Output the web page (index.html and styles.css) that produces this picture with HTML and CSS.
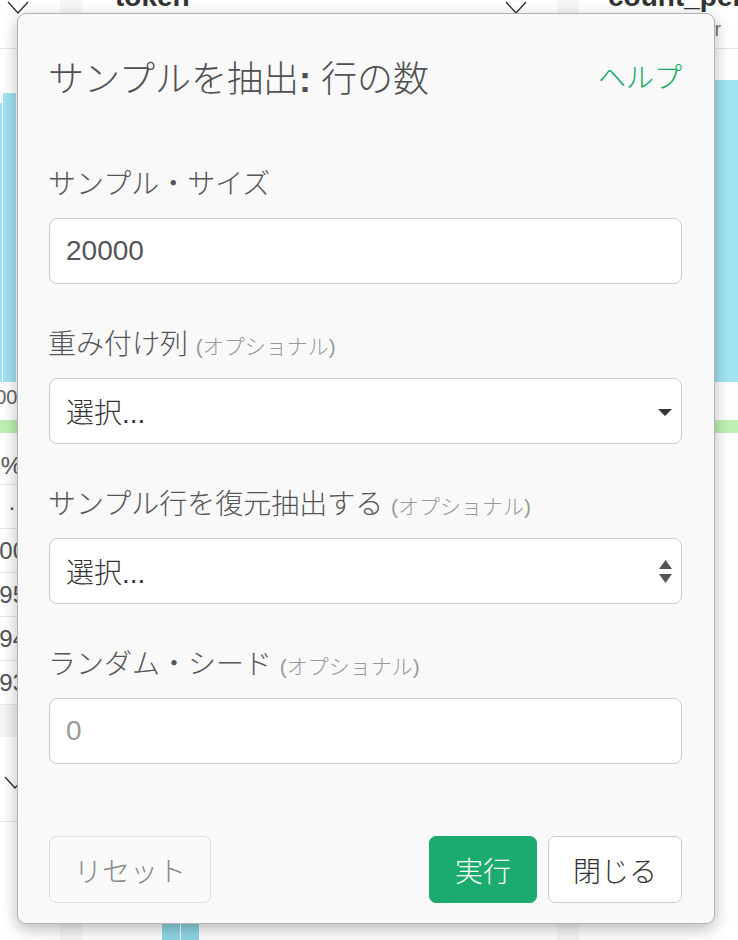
FILE: index.html
```html
<!DOCTYPE html>
<html lang="ja">
<head>
<meta charset="utf-8">
<title>サンプルを抽出</title>
<link rel="stylesheet" href="styles.css">
</head>
<body>
<div class="page">
  <div class="col col-a">
    <div class="hdr hdr-a">
      <svg class="chev" width="22" height="13" viewBox="0 0 22 13"><polyline points="1,1 11,12 21,1" fill="none" stroke="#333" stroke-width="1.4"/></svg>
    </div>
    <div class="gap-a"></div>
    <div class="chart-a"><div class="bar-thin"></div><div class="bar-wide"></div></div>
    <div class="axis">1000</div>
    <div class="green"></div>
    <div class="cell cell-pct">%</div>
    <div class="cell cell-dot">·</div>
    <div class="cell">100</div>
    <div class="cell">95</div>
    <div class="cell">94</div>
    <div class="cell">93</div>
    <div class="band"></div>
    <div class="hdr2">
      <svg class="chev" width="22" height="13" viewBox="0 0 22 13"><polyline points="1,1 11,12 21,1" fill="none" stroke="#333" stroke-width="1.4"/></svg>
    </div>
  </div>
  <div class="sep"></div>
  <div class="col col-b">
    <div class="hdr hdr-b">
      <span class="colname">token</span>
      <svg class="chev" width="22" height="13" viewBox="0 0 22 13"><polyline points="1,1 11,12 21,1" fill="none" stroke="#333" stroke-width="1.4"/></svg>
    </div>
    <div class="fill-b"></div>
    <div class="bars-b"><div class="bar-b"></div><div class="bar-b"></div></div>
  </div>
  <div class="sep"></div>
  <div class="col col-c">
    <div class="hdr hdr-c">
      <span class="colname">count_per_user</span>
      <span class="coltype">Number</span>
    </div>
    <div class="gap-c"></div>
    <div class="chart-c"></div>
    <div class="gap-c2"></div>
    <div class="green green-c"></div>
  </div>
</div>

<div class="modal">
  <div class="modal-head">
    <h1 class="modal-title">サンプルを抽出<b>:</b> 行の数</h1>
    <span class="help">ヘルプ</span>
  </div>
  <div class="modal-body">
    <div class="form-group">
      <div class="label">サンプル・サイズ</div>
      <div class="field"><span class="value">20000</span></div>
    </div>
    <div class="form-group">
      <div class="label">重み付け列 <span class="opt">(オプショナル)</span></div>
      <div class="field field-select">
        <span class="select-text">選択...</span>
        <svg class="caret" width="14" height="7" viewBox="0 0 14 7"><polygon points="0,0 14,0 7,7" fill="#333"/></svg>
      </div>
    </div>
    <div class="form-group">
      <div class="label">サンプル行を復元抽出する <span class="opt">(オプショナル)</span></div>
      <div class="field field-select">
        <span class="select-text">選択...</span>
        <svg class="updown" width="13" height="23" viewBox="0 0 13 23"><polygon points="6.5,0 13,9 0,9" fill="#555"/><polygon points="0,14 13,14 6.5,23" fill="#555"/></svg>
      </div>
    </div>
    <div class="form-group">
      <div class="label">ランダム・シード <span class="opt">(オプショナル)</span></div>
      <div class="field"><span class="placeholder">0</span></div>
    </div>
  </div>
  <div class="modal-foot">
    <button class="btn btn-reset">リセット</button>
    <div class="spacer"></div>
    <button class="btn btn-run">実行</button>
    <button class="btn btn-close">閉じる</button>
  </div>
</div>
</body>
</html>
```

FILE: styles.css
```css
* { box-sizing: border-box; }
html, body {
  margin: 0;
  padding: 0;
  background: #ffffff;
}
body {
  width: 738px;
  height: 940px;
  overflow: hidden;
  font-family: "Liberation Sans", "Noto Sans CJK JP", sans-serif;
  color: #555;
}

/* background data grid */
.page {
  display: flex;
  height: 940px;
}
.col { display: flex; flex-direction: column; overflow: hidden; }
.col-a { width: 60px; }
.col-b { width: 475px; }
.col-c { flex: 1; }
.sep { width: 22px; background: #f6f6f6; }

.hdr {
  height: 49px;
  border-bottom: 1px solid #e6e6e6;
  flex: none;
}
.hdr-a { padding: 1px 0 0 7px; }
.chev { display: block; }
.gap-a { height: 44px; flex: none; }
.chart-a { height: 289px; display: flex; flex: none; }
.bar-thin { width: 2px; background: #9fe2f0; margin-top: 10px; margin-right: 1px; }
.bar-wide { width: 13px; background: #9fe2f0; }
.axis {
  height: 38px;
  flex: none;
  font-size: 20px;
  color: #666;
  line-height: 30px;
  text-indent: -27px;
}
.green { height: 13px; background: #bdf0b2; flex: none; }
.cell {
  height: 44px;
  flex: none;
  border-bottom: 1px solid #e6e6e6;
  font-size: 24px;
  color: #555;
  display: flex;
  justify-content: flex-end;
  align-items: center;
  padding-right: 34px;
  white-space: nowrap;
}
.cell-pct { height: 52px; padding-top: 14px; padding-right: 38px; }
.cell-dot { padding-right: 44px; }
.band { height: 32px; background: #f4f4f4; flex: none; }
.hdr2 {
  height: 85px;
  flex: none;
  border-bottom: 1px solid #e6e6e6;
  padding: 39px 0 0 4px;
}

.hdr-b {
  display: flex;
  justify-content: space-between;
  align-items: flex-start;
  padding: 0 30px 0 33px;
}
.colname {
  font-weight: 700;
  font-size: 28px;
  color: #333;
  line-height: 28px;
  margin-top: -17px;
}
.hdr-b .chev { margin-top: 1px; }
.fill-b { flex: 1; }
.bars-b { display: flex; gap: 1px; height: 17px; padding-left: 80px; flex: none; }
.bar-b { width: 18px; background: #8fd6e6; }

.hdr-c {
  display: flex;
  flex-direction: column;
  padding-left: 29px;
}
.coltype {
  font-size: 20px;
  color: #777;
  line-height: 24px;
  margin-top: 6px;
  padding-left: 42px;
  white-space: nowrap;
}
.gap-c { height: 31px; flex: none; }
.chart-c { height: 302px; background: #a0e4f2; margin-left: 40px; flex: none; }
.gap-c2 { height: 38px; flex: none; }
.green-c { margin-left: 40px; }

/* modal */
.modal {
  position: absolute;
  left: 17px;
  top: 13px;
  width: 698px;
  height: 911px;
  background: #f9f9f9;
  border: 1px solid #b3b3b3;
  border-radius: 9px;
  box-shadow: 0 5px 16px rgba(0, 0, 0, 0.28);
  display: flex;
  flex-direction: column;
}
.modal-head {
  display: flex;
  justify-content: space-between;
  align-items: center;
  padding: 44px 32px 0 30px;
}
.modal-title {
  margin: 0;
  font-size: 36px;
  font-weight: 300;
  line-height: 44px;
  color: #505050;
}
.modal-title b { font-weight: 700; }
.help {
  font-size: 28px;
  font-weight: 300;
  line-height: 44px;
  color: #1aa86b;
  margin-top: -3px;
}
.modal-body {
  padding: 63px 32px 0 31px;
}
.form-group + .form-group { margin-top: 41px; }
.label {
  height: 40px;
  font-size: 28px;
  font-weight: 300;
  line-height: 40px;
  margin-bottom: 13px;
  color: #555;
  margin-left: -1px;
  white-space: nowrap;
}
.opt {
  font-size: 21px;
  line-height: 1;
  color: #999;
}
.field {
  height: 66px;
  background: #fff;
  border: 1px solid #cccccc;
  border-radius: 8px;
  padding: 0 9px 0 16px;
  display: flex;
  align-items: center;
  font-size: 28px;
  font-weight: 300;
}
.value { color: #555; font-weight: 400; }
.select-text { color: #333; flex: 1; }
.placeholder { color: #999; font-weight: 400; }
.caret { margin-top: 2px; }

.modal-foot {
  margin-top: auto;
  display: flex;
  align-items: center;
  padding: 0 32px 20px 31px;
  gap: 11px;
}
.spacer { flex: 1; }
.btn {
  height: 67px;
  padding: 0 24px;
  border-radius: 7px;
  font-family: "Liberation Sans", "Noto Sans CJK JP", sans-serif;
  font-size: 28px;
  font-weight: 300;
  border: 1px solid #cccccc;
  background: #fff;
  color: #333;
}
.btn-reset {
  border-color: #dddddd;
  background: #fafafa;
  color: #888;
}
.btn-run {
  width: 108px;
  padding: 0;
  background: #1bab6e;
  border-color: #1bab6e;
  color: #fff;
}
.btn-close {
  width: 134px;
  padding: 0;
}
```
